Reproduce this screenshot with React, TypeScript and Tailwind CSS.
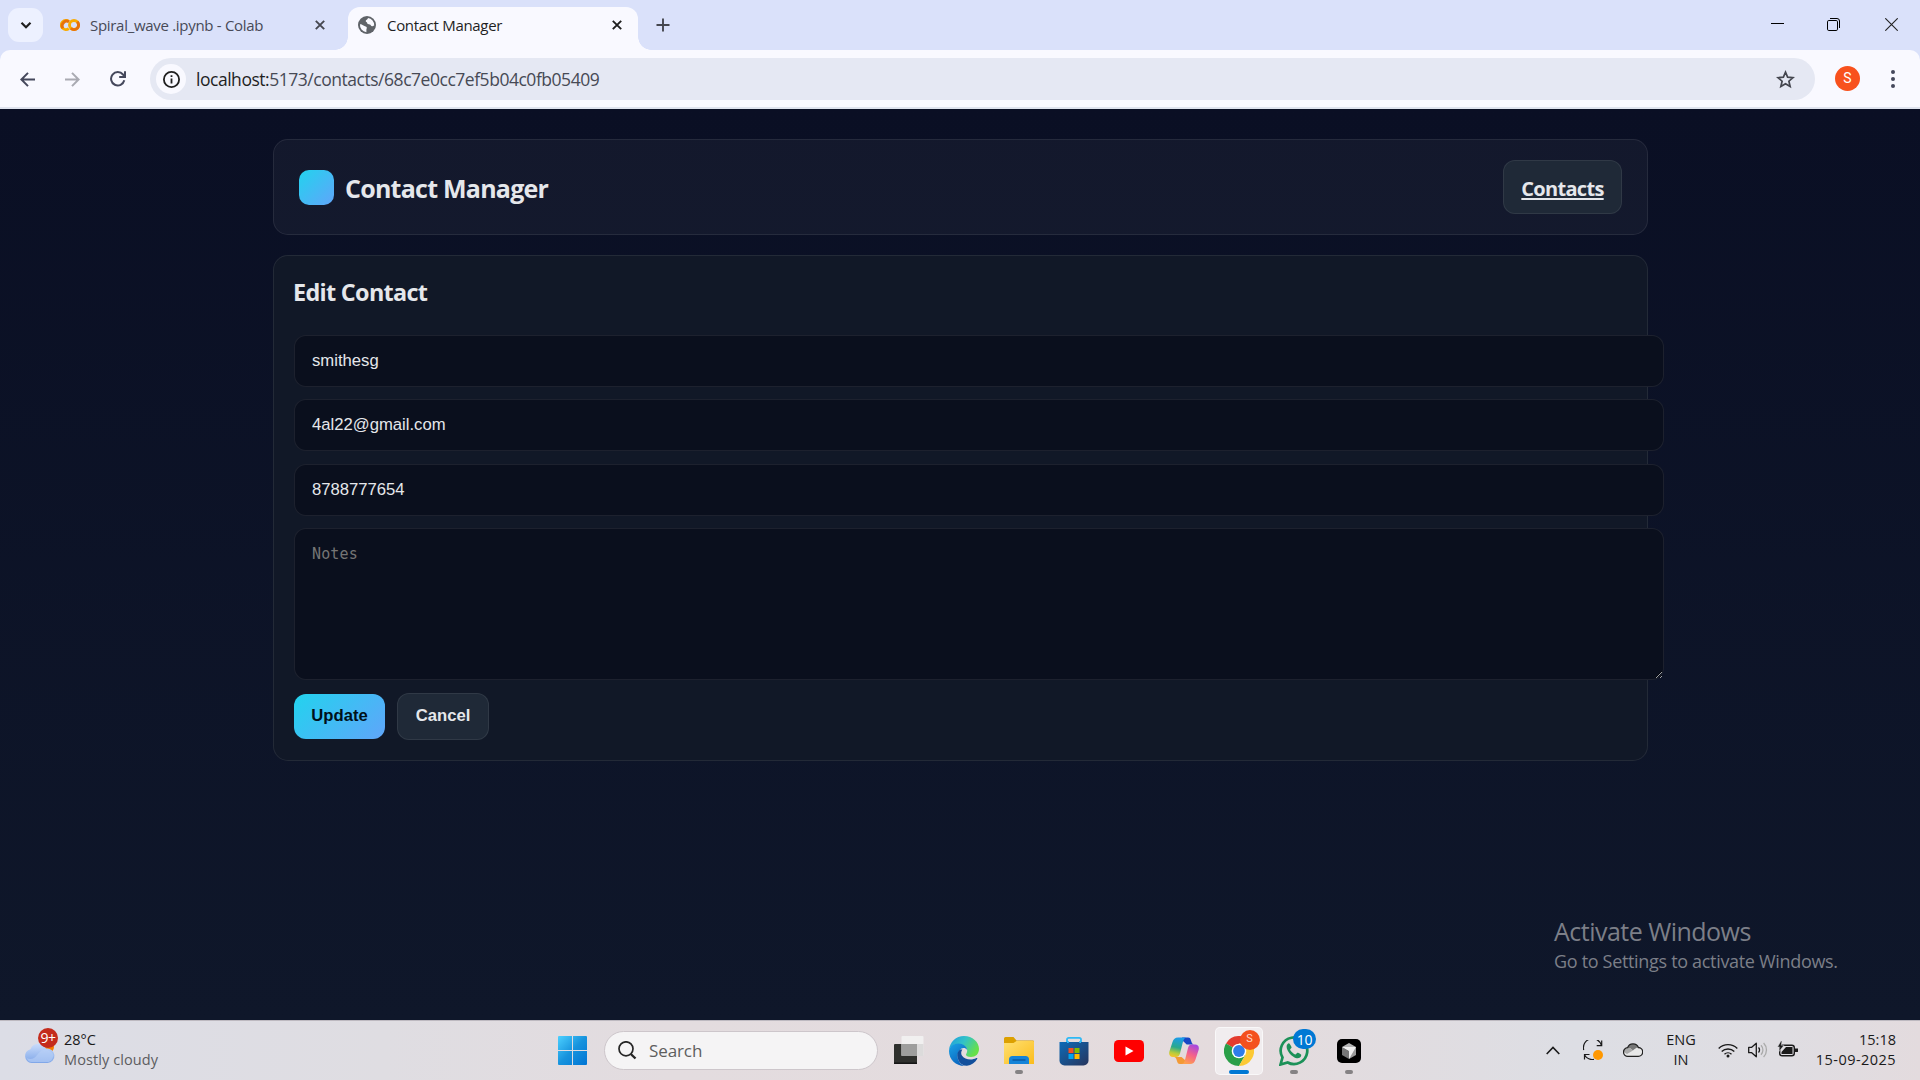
import React from "react";

const Colab = () => (
  <svg className="size-5" viewBox="0 0 20 20" fill="none" strokeWidth="2.9">
    <circle cx="14" cy="10" r="4.5" stroke="#f9ab00" />
    <path d="M8.8 6.4A4.6 4.6 0 1 0 8.8 13.6" stroke="#f9ab00" />
    <path d="M3 13.3A4.6 4.6 0 0 1 9 6.7" stroke="#e8710a" />
    <path d="M10.9 13.3A4.5 4.5 0 0 0 17.2 6.8" stroke="#e8710a" />
  </svg>
);

const Globe = () => (
  <svg className="size-[18px]" viewBox="0 0 18 18">
    <circle cx="9" cy="9" r="9" fill="#5f6368" />
    <path d="M2 8.2c1.6 0 2.6.6 4 1.5s2.200.6 2.700 1.600c.4.9-.3 1.500-.3 2.300v2.600A7.200 7.200 0 0 1 2 8.200z" fill="#f9f9ff" />
    <path d="M10 2c-.2 1.800-2.300 1.600-2.300 3 0 1.200 1.500 1 1.500 2.100 0 1.200 1.300 1.200 2.600 1.300 1.100.1 1.100 1.800 2.200 1.800.8 0 1.200-.8 2.200-.8A7.200 7.200 0 0 0 10 2z" fill="#f9f9ff" />
  </svg>
);

const Cross = ({ c }: { c: string }) => (
  <svg className="size-[10px]" viewBox="0 0 10 10" stroke={c} strokeWidth="1.9">
    <path d="M.8.8l8.400 8.400M9.200.8L.8 9.200" />
  </svg>
);

function TabStrip() {
  return (
    <div className="flex h-[50px] bg-[#dae1fa]">
      <div className="ml-2 mt-2 flex h-[34px] w-[35px] items-center justify-center rounded-[11px] bg-[#edf1ff]">
        <svg className="size-3" viewBox="0 0 12 12" fill="none" stroke="#1f1f1f" strokeWidth="2.2">
          <path d="M1.500 3.800L6 8.200l4.500-4.400" />
        </svg>
      </div>
      <div className="ml-4 flex w-[289px] items-center text-[#474a57]">
        <div className="ml-px"><Colab /></div>
        <span className="ml-[10px] w-[225px] whitespace-nowrap text-[15px] tracking-[-0.3px]">Spiral_wave .ipynb - Colab</span>
        <Cross c="#45474f" />
      </div>
      <div className="relative mt-[7px] flex w-[290px] items-center rounded-t-[12px] bg-[#f9f9ff] text-[#1f1f1f]">
        <div className="absolute -left-[13px] bottom-0 size-[13px] bg-[radial-gradient(circle_at_0_0,#dae1fa_12.500px,#f9f9ff_13px)]" />
        <div className="absolute -right-[13px] bottom-0 size-[13px] bg-[radial-gradient(circle_at_100%_0,#dae1fa_12.500px,#f9f9ff_13px)]" />
        <div className="mb-[7px] ml-[10px]"><Globe /></div>
        <span className="mb-[7px] ml-[11px] w-[225px] whitespace-nowrap text-[15px] tracking-[-0.320px]">Contact Manager</span>
        <div className="mb-[7px]"><Cross c="#1f1f1f" /></div>
      </div>
      <div className="ml-[18px] flex items-center">
        <svg className="size-[14px]" viewBox="0 0 14 14" stroke="#45474f" strokeWidth="1.9"><path d="M7 .5v13M.5 7h13" /></svg>
      </div>
      <div className="ml-auto mr-[22px] flex items-start pt-[18px]">
        <svg className="mr-[43px] h-[14px] w-[13px]" viewBox="0 0 13 14" stroke="#000"><path d="M0 5.500h13" /></svg>
        <svg className="mr-[45px] size-[13px]" viewBox="0 0 13 13" fill="none" stroke="#000">
          <path d="M3 .5h7a2.500 2.500 0 0 1 2.500 2.500v7" />
          <rect x=".5" y="2.500" width="10" height="10" rx="1.300" />
        </svg>
        <svg className="size-[13px]" viewBox="0 0 13 13" stroke="#222" strokeWidth="1.100"><path d="M.3.300l12.400 12.400M12.700.300L.3 12.700" /></svg>
      </div>
    </div>
  );
}

function Toolbar() {
  return (
    <div className="bg-[#dae1fa]">
      <div className="flex h-[59px] items-start rounded-t-[10px] border-b-2 border-[#dfe3ee] bg-[#f9f9ff]">
        <div className="flex h-[58px] w-[150px] items-center pl-5">
          <svg className="size-[15px]" viewBox="0 0 15 15" fill="none" stroke="#45485c" strokeWidth="2"><path d="M15 7.500H1.800M8 .9L1.400 7.500 8 14.100" /></svg>
          <svg className="ml-[30px] size-[15px]" viewBox="0 0 15 15" fill="none" stroke="#a9aab2" strokeWidth="2"><path d="M0 7.500h13.200M7 .9l6.600 6.600L7 14.100" /></svg>
          <svg className="ml-[30px] size-4" viewBox="0 0 16 16" fill="none" stroke="#45485c" strokeWidth="2">
            <path d="M14.300 9.300A6.700 6.700 0 1 1 13 3.500l1.600 1.700" />
            <path d="M15 .2v5.800H9.200" />
          </svg>
        </div>
        <div className="mt-2 flex h-[42px] w-[1665px] items-center rounded-full bg-[#e5e8f3]">
          <div className="ml-[6px] flex size-[30px] items-center justify-center rounded-full bg-[#f9f9ff]">
            <svg className="size-[17px]" viewBox="0 0 17 17" fill="none" stroke="#1f1f1f" strokeWidth="1.800">
              <circle cx="8.500" cy="8.500" r="7.600" />
              <path d="M8.500 7.500v5M8.500 4.200v1.900" />
            </svg>
          </div>
          <span className="ml-[10px] whitespace-nowrap text-[17.500px] tracking-[-0.470px] text-[#474a55]">
            <span className="text-[#1f1f1f]">localhost:</span>5173/contacts/68c7e0cc7ef5b04c0fb05409
          </span>
          <svg className="ml-auto mr-5 size-[19px]" viewBox="0 0 19 19" fill="none" stroke="#45474f" strokeWidth="1.700">
            <path d="M9.500 2.200l2.100 5 5.400.450-4.100 3.550 1.250 5.300L9.500 13.700l-4.650 2.800 1.250-5.300L2 7.650l5.400-.45z" />
          </svg>
        </div>
        <div className="ml-5 mt-4 flex size-[25px] items-center justify-center rounded-full bg-[#f8511d] font-[Roboto] text-[14px] text-white">S</div>
        <div className="ml-auto mr-[25px] mt-5 flex flex-col gap-[3px]">
          <i className="size-1 rounded-full bg-[#45485c]" />
          <i className="size-1 rounded-full bg-[#45485c]" />
          <i className="size-1 rounded-full bg-[#45485c]" />
        </div>
      </div>
    </div>
  );
}

const fieldClass =
  "block box-content h-[20px] w-[1334px] rounded-[12px] border border-white/[0.08] bg-[#0a0f1d] py-[15px] px-[17px] font-['Liberation_Sans'] text-[16.670px] leading-[20px] text-[#e5e7eb] outline-none";

function Page() {
  return (
    <main className="relative h-[911px] bg-[linear-gradient(180deg,#0a0f24,#0f172a)] pt-[30px] text-[#e5e7eb]">
      <div className="ml-[273px] w-[1375px]">
        <header className="flex h-[96px] items-center justify-between rounded-[15px] border border-white/[0.08] bg-white/[0.04] px-[25px]">
          <div className="flex items-center">
            <div className="size-[35px] rounded-[10px] bg-[linear-gradient(135deg,#22d3ee,#60a5fa)]" />
            <span className="ml-[11px] mt-1 whitespace-nowrap text-[25px] font-bold tracking-[-0.750px]">Contact Manager</span>
          </div>
          <a className="flex h-[54px] w-[119px] items-center justify-center rounded-[12px] border border-white/[0.08] bg-[#1f2937] text-[20px] font-bold tracking-[-0.700px]">
            <span className="mt-1 underline decoration-2 underline-offset-[2px]">Contacts</span>
          </a>
        </header>
        <section className="mt-5 h-[506px] rounded-[15px] border border-white/[0.08] bg-[#111827] px-5 pt-[21px]">
          <h2 className="mb-[27px] -ml-px text-[23.400px] font-bold leading-[31px] tracking-[-0.680px]">Edit Contact</h2>
          <div className="flex flex-col">
            <input className={fieldClass + " mb-3"} defaultValue="smithesg" />
            <input className={fieldClass + " mb-[13px]"} defaultValue="4al22@gmail.com" />
            <input className={fieldClass + " mb-3"} defaultValue="8788777654" />
          </div>
          <textarea
            className="mb-[13px] block box-content h-[120px] w-[1334px] resize rounded-[12px] border border-white/[0.08] bg-[#0a0f1d] px-[17px] py-[15px] font-['DejaVu_Sans_Mono'] text-[15px] leading-[20px] tracking-[0.130px] outline-none placeholder:text-[#757575]"
            placeholder="Notes"
          />
          <div className="flex items-center gap-3 font-['Liberation_Sans'] text-[16.670px] font-bold">
            <button className="h-[45px] w-[91px] rounded-[12px] bg-[linear-gradient(135deg,#22d3ee,#60a5fa)] pb-[2px] text-[#00111a]">Update</button>
            <button className="h-[47px] w-[92px] rounded-[12px] border border-white/[0.08] bg-[#1f2937] pb-[2px]">Cancel</button>
          </div>
        </section>
      </div>
      <div className="absolute left-[1554px] top-[807px] whitespace-nowrap text-[#7c7f88]">
        <p className="text-[25px] leading-[30px] tracking-[-0.520px]">Activate Windows</p>
        <p className="text-[18px] leading-[30px] tracking-[-0.320px]">Go to Settings to activate Windows.</p>
      </div>
    </main>
  );
}

const Weather = () => (
  <svg className="h-[38px] w-[36px]" viewBox="0 0 36 38">
    <defs>
      <linearGradient id="cl" x1="0" y1="0" x2="0" y2="1"><stop stopColor="#c9dcfb" /><stop offset="1" stopColor="#7fa6e8" /></linearGradient>
    </defs>
    <circle cx="24" cy="19" r="6" fill="#f57c00" />
    <path d="M7.500 35a7 7 0 0 1-1-13.800A8.500 8.500 0 0 1 22 20.500a7.300 7.300 0 1 1 1.500 14.500z" fill="url(#cl)" />
    <path d="M8 34a5 5 0 0 1-5-4c2 1.500 5 1 7 0 3-1.500 4-6 9-8 4-1 9 1 10.500 5-1 5-3 7-6 7z" fill="#b9d1f7" opacity=".6" />
    <circle cx="24" cy="10" r="10" fill="#c42b1c" />
    <text x="24" y="14.500" textAnchor="middle" fontSize="14" fill="#fff" fontFamily="Open Sans" letterSpacing="-.5">9+</text>
  </svg>
);

const Start = () => (
  <svg className="size-[29px]" viewBox="0 0 29 29">
    <defs><linearGradient id="st" x1="0" y1="0" x2="29" y2="29" gradientUnits="userSpaceOnUse"><stop stopColor="#4cd0ff" /><stop offset=".5" stopColor="#1793dd" /><stop offset="1" stopColor="#0074d4" /></linearGradient></defs>
    <path d="M1 0h13v14H0V1a1 1 0 0 1 1-1zM15 0h13a1 1 0 0 1 1 1v13H15zM0 15h14v14H1a1 1 0 0 1-1-1zM15 15h14v13a1 1 0 0 1-1 1H15z" fill="url(#st)" />
  </svg>
);

const TaskView = () => (
  <svg className="size-[30px]" viewBox="0 0 30 30">
    <rect x="0" y="8" width="23" height="20" rx="1" fill="#2f302d" />
    <rect x="0" y="26.500" width="23" height="1.500" fill="#151515" />
    <rect x="7.500" y="0" width="22" height="20" rx="1" fill="#f1f0f0" />
    <rect x="7.500" y="8" width="15.500" height="12" fill="#9e9e9d" />
    <path d="M23 8h6.500v12H23z" fill="#dcdbdb" />
  </svg>
);

const Edge = () => (
  <svg className="size-[30px]" viewBox="0 0 30 30">
    <defs>
      <linearGradient id="e1" x1="0" y1="0" x2="1" y2=".5"><stop stopColor="#1d9ae0" /><stop offset=".5" stopColor="#32c2c8" /><stop offset="1" stopColor="#66e04a" /></linearGradient>
      <linearGradient id="e2" x1="0" y1="0" x2=".6" y2="1"><stop stopColor="#1aa4e6" /><stop offset="1" stopColor="#0a61bd" /></linearGradient>
    </defs>
    <path d="M0 14C.8 6 7 0 15 0c8.500 0 15 6 15 13 0 5-3.500 8-8 8-3.500 0-5-1.300-5-2.500 0-.8 1.200-1.500 1.200-4C18 10.500 13.500 8 9.500 8 5 8 1 11 0 14z" fill="url(#e1)" />
    <path d="M0 15C0 10.500 4.500 7.500 9.500 7.500c4.800 0 8.600 3 8.600 6.500-1-1.500-2-2-3.500-2-2.800 0-6 3.500-6 8 0 6 4.500 9.800 8 9.900C7.500 30.500 0 24 0 15z" fill="url(#e2)" />
    <path d="M10.500 14c-2 2-2.500 4-2 7 .8 5 4.500 9 9.500 8.700 4.500-.6 8-3 10.300-7 .3-.7-.3-1-.9-.6-5 2.800-12 1.400-14.500-2.500-1-1.700-1-4 .5-6-1 0-2.200-.3-2.900.4z" fill="#124f9c" />
  </svg>
);

const Folder = () => (
  <svg className="h-[27px] w-[30px]" viewBox="0 0 30 27">
    <defs><linearGradient id="fo" x1="0" y1="0" x2="1" y2="1"><stop stopColor="#ffe071" /><stop offset="1" stopColor="#fbbc1c" /></linearGradient></defs>
    <path d="M0 1.500A1.500 1.500 0 0 1 1.500 0h8L12.500 3.500H29a1 1 0 0 1 1 1V10H0z" fill="#dca000" />
    <path d="M0 6h9.500l3-2H29a1 1 0 0 1 1 1v22H0z" fill="url(#fo)" />
    <path d="M5 27v-4.500A3.500 3.500 0 0 1 8.500 19h13a3.500 3.500 0 0 1 3.500 3.500V27z" fill="#1583d8" />
    <path d="M8.500 23h13" stroke="#0a529b" strokeWidth="1.300" />
  </svg>
);

const Store = () => (
  <svg className="size-[30px]" viewBox="0 0 30 30">
    <defs><linearGradient id="so" x1="0" y1="0" x2="1" y2="1"><stop stopColor="#0d6bb8" /><stop offset="1" stopColor="#27345c" /></linearGradient></defs>
    <path d="M8 9V3.500A1.700 1.700 0 0 1 9.700 1.800h10.600A1.700 1.700 0 0 1 22 3.500V9" fill="none" stroke="#2fb9f5" strokeWidth="1.800" />
    <path d="M.5 6h29v18.500a5 5 0 0 1-5 5h-19a5 5 0 0 1-5-5z" fill="url(#so)" />
    <path d="M8 6h1.800M20.200 6H22" stroke="#2fb9f5" strokeWidth="2" />
    <path d="M9.500 12h5v5h-5z" fill="#f25022" /><path d="M15.500 12h5v5h-5z" fill="#7fba00" /><path d="M9.500 18h5v5h-5z" fill="#00a4ef" /><path d="M15.500 18h5v5h-5z" fill="#ffb900" />
  </svg>
);

const YouTube = () => (
  <svg className="h-[22px] w-[30px]" viewBox="0 0 30 22">
    <rect width="30" height="22" rx="4.500" fill="#f00" /><path d="M11.500 6.500v9L19.500 11z" fill="#fff" />
  </svg>
);

const Copilot = () => (
  <svg className="size-[30px]" viewBox="0 0 30 30">
    <defs>
      <linearGradient id="c1" x1=".5" y1="0" x2=".3" y2="1"><stop stopColor="#1b9bea" /><stop offset=".5" stopColor="#2aa98c" /><stop offset=".8" stopColor="#b7cc3c" /><stop offset="1" stopColor="#f5c52c" /></linearGradient>
      <linearGradient id="c2" x1=".7" y1="0" x2=".3" y2="1"><stop stopColor="#a648e0" /><stop offset=".5" stopColor="#f4628b" /><stop offset="1" stopColor="#ffa14d" /></linearGradient>
    </defs>
    <path d="M13 1.500h6c2 0 2.500 1 3.200 3.500.6 2 1.300 3.500 3 3.500h-7.500L14 5z" fill="#1847c5" />
    <path d="M17 28h-6c-2 0-2.500-1-3.200-3.500C7.200 22.500 6.500 21 5 21h7.500l3.500 3z" fill="#f39a35" />
    <path d="M9 1.500h8c-2.500 1-3 4-4 8l-2 8c-.6 2.500-2 3.500-4 3.500H4c-3 0-4.500-2-3.600-5.500L3.500 6C4.500 3 6 1.500 9 1.500z" fill="url(#c1)" />
    <path d="M21 28h-8c2.500-1 3-4 4-8l2-8c.6-2.500 2-3.500 4-3.500h3c3 0 4.500 2 3.600 5.500L26.500 23.500c-1 3-2.500 4.500-5.500 4.500z" fill="url(#c2)" />
  </svg>
);

const Chrome = () => (
  <svg className="size-[30px]" viewBox="0 0 30 30">
    <path d="M15 15L2 7.500A15 15 0 0 1 28 7.500H15z" fill="#e33b2e" />
    <path d="M15 15L2 7.500A15 15 0 0 0 15 30l6.500-11.200z" fill="#2a9f48" />
    <path d="M15 15V7.500h13A15 15 0 0 1 15 30l6.500-11.200z" fill="#fcc934" />
    <circle cx="15" cy="15" r="7.300" fill="#fff" /><circle cx="15" cy="15" r="5.900" fill="#2f7de9" />
  </svg>
);

const WhatsApp = () => (
  <svg className="size-[30px]" viewBox="0 0 30 30">
    <path d="M1.500 28.500l2-7A13.300 13.300 0 1 1 8.700 26.500z" fill="none" stroke="#1c9158" strokeWidth="2.700" />
    <path d="M10.800 8c-.5-.9-1.500-.8-2.200-.1-3.500 3.700 3.300 13 9.200 14.300 2.200.3 4.300-.9 4.500-3.200.1-.9-3.300-2.700-4-2.300-.7.500-1.200 1.800-1.900 1.800-1.300 0-5-3.400-5.300-5 0-.7 1.500-1.300 1.500-2.200 0-.6-1.300-2.600-1.800-3.300z" fill="#1c9158" />
  </svg>
);

const CursorApp = () => (
  <svg className="size-6" viewBox="0 0 24 24">
    <rect width="24" height="24" rx="5" fill="#000" />
    <path d="M12 4l7 4-7 4-7-4z" fill="#b5b5b5" />
    <path d="M5 8l7 4v8l-7-4z" fill="#777" />
    <path d="M19 8v8l-7 4v-8z" fill="#9b9b9b" />
    <path d="M5 8h14l-7 12v-8z" fill="#efefef" />
  </svg>
);

const Cell = ({ children, dot }: { children: React.ReactNode; dot?: boolean }) => (
  <div className="relative flex h-full w-[55px] items-center justify-center">
    {children}
    {dot && <i className="absolute bottom-[6px] left-[23.500px] h-1 w-2 rounded-full bg-[#858284]" />}
  </div>
);

function Tray() {
  return (
    <div className="ml-auto flex h-full w-[380px] items-center pb-px text-[#1a1a1a]">
      <svg className="ml-[6px] h-[9px] w-[14px]" viewBox="0 0 14 9" fill="none" stroke="#1a1a1a" strokeWidth="1.600"><path d="M.7 8L7 1.500 13.300 8" /></svg>
      <svg className="ml-[23px] size-5" viewBox="0 0 20 20" fill="none" stroke="#1a1a1a" strokeWidth="1.200">
        <path d="M.7 10A9 9 0 0 1 18.500 5.500M18.700.500v5.200h-5M11 19.300a9 9 0 0 1-9.500-4.500M1.500 19.500v-5h5" />
        <circle cx="15" cy="15" r="5" fill="#ff9800" stroke="none" />
      </svg>
      <svg className="ml-5 h-[14px] w-5" viewBox="0 0 20 14">
        <path d="M5 13.300a4.300 4.300 0 0 1-.4-8.600 5.800 5.800 0 0 1 10.800-.2 4.400 4.400 0 0 1-.2 8.800z" fill="#e8e8e8" />
        <path d="M4.600 4.700a5.800 5.800 0 0 1 10.800-.2c-3 0-4 2-5.500 3C8.500 6 7 4.700 4.600 4.700z" fill="#777" />
        <path d="M4.600 4.700C7 4.800 8.500 6 10 7.500L4 11 .7 9c0-2.500 2-4.300 3.900-4.300z" fill="#aaa" />
        <path d="M5 13.300a4.300 4.300 0 0 1-.4-8.600 5.800 5.800 0 0 1 10.800-.2 4.400 4.400 0 0 1-.2 8.800z" fill="none" stroke="#222" strokeWidth="1.300" />
      </svg>
      <div className="ml-[18px] w-10 text-center text-[14.500px] leading-5">
        <p>ENG</p><p>IN</p>
      </div>
      <svg className="ml-[17px] h-[15px] w-5" viewBox="0 0 20 15" fill="none" stroke="#1a1a1a" strokeWidth="1.400">
        <path d="M.7 5.500a13 13 0 0 1 18.600 0M3.700 8.600a9 9 0 0 1 12.600 0M6.500 11.300a5 5 0 0 1 7 0" /><circle cx="10" cy="13" r="1.500" fill="#1a1a1a" stroke="none" />
      </svg>
      <svg className="ml-[10px] h-4 w-5" viewBox="0 0 20 16" fill="none" stroke="#1a1a1a" strokeWidth="1.300">
        <path d="M.7 5.300h3L8.300 1.200v13.600L3.700 10.700h-3z" strokeLinejoin="round" /><path d="M10.500 5.500a3.500 3.500 0 0 1 0 5" /><path d="M13 3.200a7 7 0 0 1 0 9.600M15.600 1a10 10 0 0 1 0 14" stroke="#aaa" />
      </svg>
      <svg className="ml-[9px] h-[18px] w-[21px]" viewBox="0 0 21 18">
        <rect x="2.700" y="4.200" width="14.600" height="10.600" rx="2.500" fill="none" stroke="#1a1a1a" strokeWidth="1.400" /><path d="M4.500 13v-2L9 6h6.500v7zM18 7.500h1.500a1.500 1.500 0 0 1 1 3.500H18z" fill="#1a1a1a" />
        <path d="M4 0L.5 6h2.300L2 10.500 7 4.300H4.200L5 0z" fill="#1a1a1a" stroke="#dedfe5" strokeWidth=".5" />
      </svg>
      <div className="ml-auto mr-6 text-right text-[14.500px] leading-5">
        <p>15:18</p><p className="tracking-[0.450px]">15-09-2025</p>
      </div>
    </div>
  );
}

function Taskbar() {
  return (
    <footer className="flex h-[60px] items-center border-t border-[#bdb9c0] bg-[linear-gradient(90deg,#dcdde6_0%,#dfdde2_20%,#e3dcdf_35%,#e4dbdd_65%,#dddee4_82%,#dfdde2_93%,#e3dbde_100%)]">
      <div className="flex w-[558px] items-center pl-6">
        <div className="-mt-2"><Weather /></div>
        <div className="-mt-[2px] ml-1 whitespace-nowrap text-[14.500px] leading-5">
          <p className="text-[#1a1a1a]">28°C</p>
          <p className="tracking-[0.100px] text-[#5c5c60]">Mostly cloudy</p>
        </div>
      </div>
      <Start />
      <div className="ml-[17px] flex h-[39px] w-[274px] items-center rounded-full border border-[#cdc6cb] bg-[#f5f4f5] pl-[13px]">
        <svg className="size-[19px]" viewBox="0 0 19 19" fill="none" stroke="#262626"><circle cx="8" cy="7.800" r="7" strokeWidth="1.700" /><path d="M12.800 13l4.700 4.500" strokeWidth="2.400" /></svg>
        <span className="ml-[12px] text-[17px] tracking-[-0.100px] text-[#5e5e5e]">Search</span>
      </div>
      <div className="ml-[3px] flex h-full">
        <Cell><TaskView /></Cell>
        <Cell><Edge /></Cell>
        <Cell dot><Folder /></Cell>
        <Cell><Store /></Cell>
        <Cell><YouTube /></Cell>
        <Cell><Copilot /></Cell>
        <Cell>
          <div className="relative flex size-12 items-center justify-center rounded-[5px] border border-white/60 bg-[#f1edef]">
            <Chrome />
            <span className="absolute right-[2px] top-[2px] flex size-5 items-center justify-center rounded-full bg-[#f4511e] font-[Roboto] text-[11px] text-[#ffd9cc]">S</span>
            <i className="absolute bottom-0 left-[13px] h-1 w-5 rounded-full bg-[#0078d4]" />
          </div>
        </Cell>
        <Cell dot>
          <WhatsApp />
          <span className="absolute right-[5px] top-2 flex h-5 w-[23px] items-center justify-center rounded-full bg-[#0078d4] text-[14px] tracking-[-0.300px] text-white">10</span>
        </Cell>
        <Cell dot><CursorApp /></Cell>
      </div>
      <Tray />
    </footer>
  );
}

export default function App() {
  return (
    <div className="flex h-[1080px] w-[1920px] flex-col overflow-hidden font-['Open_Sans',sans-serif]">
      <TabStrip />
      <Toolbar />
      <Page />
      <Taskbar />
    </div>
  );
}
